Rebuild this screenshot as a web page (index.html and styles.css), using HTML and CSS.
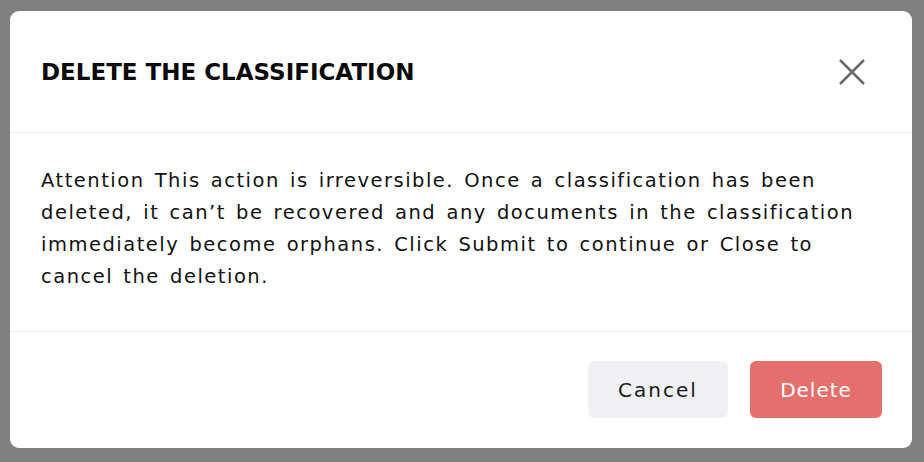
FILE: index.html
```html
<!DOCTYPE html>
<html lang="en">
<head>
<meta charset="utf-8">
<title>Delete the classification</title>
<link rel="stylesheet" href="styles.css">
</head>
<body>
<div class="dialog" role="dialog" aria-labelledby="dlg-title">
  <header class="dialog-header">
    <h2 id="dlg-title" class="dialog-title">DELETE THE CLASSIFICATION</h2>
    <button class="close-btn" aria-label="Close">
      <svg width="26" height="26" viewBox="0 0 26 26" aria-hidden="true"><path d="M1 1L25 25M25 1L1 25" stroke="#6b6b6b" stroke-width="2.6" stroke-linecap="butt" fill="none"/></svg>
    </button>
  </header>
  <div class="dialog-body">
    <p>Attention This action is irreversible. Once a classification has been deleted, it can’t be recovered and any documents in the classification immediately become orphans. Click Submit to continue or Close to cancel the deletion.</p>
  </div>
  <footer class="dialog-footer">
    <button class="btn btn-cancel">Cancel</button>
    <button class="btn btn-delete">Delete</button>
  </footer>
</div>
</body>
</html>
```

FILE: styles.css
```css
* { box-sizing: border-box; }
html, body { height: 100%; }
body {
  margin: 0;
  background: #808080;
  padding: 11px 12px 0 10px;
  font-family: "DejaVu Sans", "Open Sans", sans-serif;
  color: #111;
}
.dialog {
  background: #fff;
  border-radius: 9px;
  height: 437px;
  display: flex;
  flex-direction: column;
  overflow: hidden;
}
.dialog-header {
  height: 122px;
  border-bottom: 1px solid #f0f0f4;
  display: flex;
  align-items: center;
  justify-content: space-between;
  padding: 0 47px 0 31px;
  flex: none;
}
.dialog-title {
  margin: 0;
  font-size: 23px;
  font-weight: 700;
  color: #0a0a0a;
}
.close-btn {
  background: none;
  border: 0;
  padding: 0;
  width: 26px;
  height: 26px;
  display: flex;
  cursor: pointer;
}
.dialog-body {
  padding: 32px 31px 0 31px;
  border-bottom: 1px solid #f0f0f4;
  height: 199px;
  flex: none;
}
.dialog-body p {
  margin: 0;
  font-size: 19.5px;
  line-height: 32px;
  letter-spacing: 1.5px;
  word-spacing: 2.5px;
  color: #111;
}
.dialog-footer {
  flex: 1;
  display: flex;
  justify-content: flex-end;
  align-items: center;
  gap: 22px;
  padding: 0 30px 1px 0;
}
.btn {
  height: 57px;
  border: 0;
  border-radius: 6px;
  font-family: inherit;
  font-size: 20px;
  letter-spacing: 1.5px;
  cursor: pointer;
}
.btn-cancel {
  width: 140px;
  background: #f0f1f5;
  color: #1a1a1a;
  letter-spacing: 2px;
}
.btn-delete {
  width: 132px;
  background: #e3706c;
  color: #fff;
  letter-spacing: 1px;
}
```
